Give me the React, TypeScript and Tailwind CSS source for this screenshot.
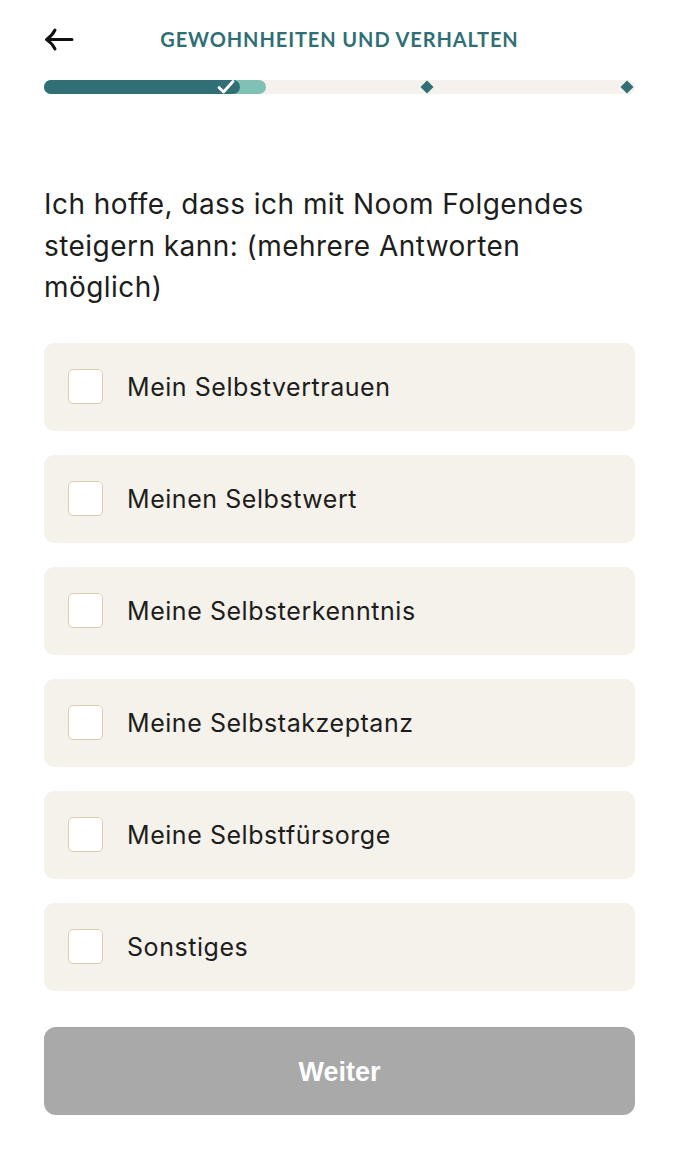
import { useState } from "react";

const options = [
  "Mein Selbstvertrauen",
  "Meinen Selbstwert",
  "Meine Selbsterkenntnis",
  "Meine Selbstakzeptanz",
  "Meine Selbstfürsorge",
  "Sonstiges",
];

const Diamond = () => (
  <svg width="14" height="14" viewBox="0 0 14 14">
    <path d="M7 0.5 L13.5 7 L7 13.5 L0.5 7 Z" fill="#2f6f75" />
  </svg>
);

export default function App() {
  const [checked, setChecked] = useState<string[]>([]);

  const toggle = (opt: string) => {
    setChecked((prev) =>
      prev.includes(opt) ? prev.filter((o) => o !== opt) : [...prev, opt]
    );
  };

  return (
    <div className="min-h-[1153px] bg-white font-['Inter',sans-serif] text-[#1d1d1b]">
      <div className="ml-[44px] w-[591px]">
        {/* header */}
        <div className="relative flex h-[80px] items-center justify-center pb-[2px]">
          <button className="absolute left-0 top-[27px]">
            <svg width="30" height="26" viewBox="0 0 30 26" fill="none">
              <path
                d="M28 12.5 H2.5 M11 3 Q8 9 2.5 12.5 Q8 16 11 22"
                stroke="#111"
                strokeWidth="3"
                strokeLinecap="round"
                strokeLinejoin="round"
              />
            </svg>
          </button>
          <p className="font-['Lato',sans-serif] text-[20px] font-bold tracking-[0.9px] text-[#2f6f75]">
            GEWOHNHEITEN UND VERHALTEN
          </p>
        </div>

        {/* progress */}
        <div className="relative h-[14px] rounded-full bg-[#f5f1ec]">
          <div className="absolute left-0 top-0 h-[14px] w-[222px] rounded-full bg-[#80c1b5]" />
          <div className="absolute left-0 top-0 h-[14px] w-[196px] rounded-full bg-[#2f6f75]" />
          <svg
            className="absolute left-[172px] top-[-1px]"
            width="20"
            height="16"
            viewBox="0 0 20 16"
            fill="none"
          >
            <path
              d="M3 8.5 L7.5 13 L17 2.5"
              stroke="#fff"
              strokeWidth="2.8"
              strokeLinecap="round"
              strokeLinejoin="round"
            />
          </svg>
          <div className="absolute left-[376px] top-0">
            <Diamond />
          </div>
          <div className="absolute left-[576px] top-0">
            <Diamond />
          </div>
        </div>

        {/* question */}
        <h1 className="mt-[90px] text-[28px] leading-[41.5px] tracking-[0.45px]">
          Ich hoffe, dass ich mit Noom Folgendes steigern kann: (mehrere
          Antworten möglich)
        </h1>

        {/* options */}
        <div className="mt-[34px] flex flex-col gap-[24px]">
          {options.map((opt) => {
            const on = checked.includes(opt);
            return (
              <button
                key={opt}
                onClick={() => toggle(opt)}
                className="flex h-[88px] items-center gap-[24px] rounded-[10px] bg-[#f5f1eb] px-[24px] text-left"
              >
                <span
                  className={
                    on
                      ? "flex h-[35px] w-[35px] items-center justify-center rounded-[5px] border border-[#2f6f75] bg-[#2f6f75]"
                      : "h-[35px] w-[35px] rounded-[5px] border border-[#d9cab2] bg-white"
                  }
                >
                  {on && (
                    <svg width="20" height="16" viewBox="0 0 20 16" fill="none">
                      <path
                        d="M3 8.5 L7.5 13 L17 2.5"
                        stroke="#fff"
                        strokeWidth="2.6"
                        strokeLinecap="round"
                      />
                    </svg>
                  )}
                </span>
                <span className="pt-[2px] text-[25px] tracking-[0.55px]">{opt}</span>
              </button>
            );
          })}
        </div>

        {/* button */}
        <button
          disabled={checked.length === 0}
          className="mt-[36px] flex h-[88px] w-full items-center justify-center rounded-[12px] bg-[#a9a9a9] pt-[3px] font-['Liberation_Sans',sans-serif] text-[27px] font-bold text-white"
        >
          Weiter
        </button>
      </div>
    </div>
  );
}
